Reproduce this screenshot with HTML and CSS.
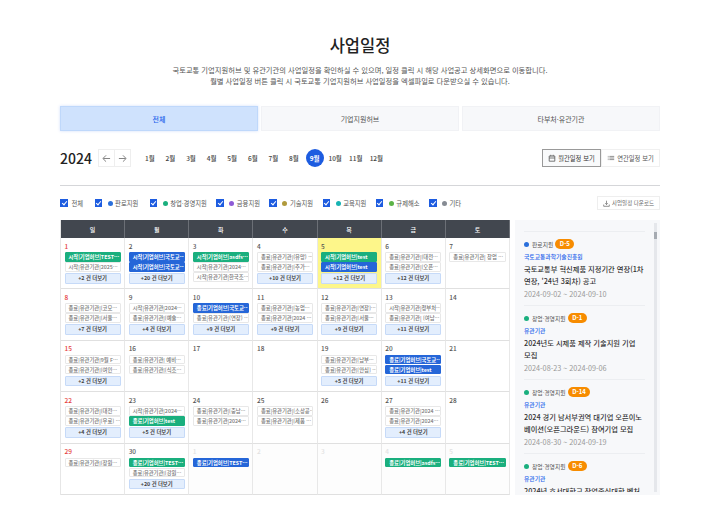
FILE: index.html
```html
<!DOCTYPE html>
<html lang="ko">
<head>
<meta charset="utf-8">
<title>사업일정</title>
<link rel="stylesheet" href="styles.css">
</head>
<body>
<main class="page">
  <h1 class="title">사업일정</h1>
  <p class="lead">국토교통 기업지원허브 및 유관기관의 사업일정을 확인하실 수 있으며, 일정 클릭 시 해당 사업공고 상세화면으로 이동합니다.<br>월별 사업일정 버튼 클릭 시 국토교통 기업지원허브 사업일정을 엑셀파일로 다운받으실 수 있습니다.</p>

  <nav class="tabs">
    <a class="tab active">전체</a>
    <a class="tab">기업지원허브</a>
    <a class="tab">타부처·유관기관</a>
  </nav>

  <section class="toolbar">
    <strong class="year">2024</strong>
    <div class="arrows">
      <button class="arrow"><svg width="9" height="9" viewBox="0 0 10 10"><path d="M9 5H1.500M4.500 1.500 1 5l3.500 3.500" fill="none" stroke="#777" stroke-width="1"/></svg></button>
      <button class="arrow"><svg width="9" height="9" viewBox="0 0 10 10"><path d="M1 5h7.500M5.500 1.500 9 5 5.500 8.500" fill="none" stroke="#777" stroke-width="1"/></svg></button>
    </div>
    <ul class="months">
      <li>1월</li><li>2월</li><li>3월</li><li>4월</li><li>5월</li><li>6월</li><li>7월</li><li>8월</li><li class="current">9월</li><li>10월</li><li>11월</li><li>12월</li>
    </ul>
    <div class="views">
      <button class="view on"><svg width="8" height="8" viewBox="0 0 10 10"><path d="M1.500 2.500h7v6.500h-7zM1.500 5h7M3.500 1v2M6.500 1v2" fill="none" stroke="#555" stroke-width="1"/></svg>월간일정 보기</button>
      <button class="view"><svg width="8" height="8" viewBox="0 0 10 10"><path d="M1 3h1M3 3h6M1 5h1M3 5h6M1 7h1M3 7h6" fill="none" stroke="#777" stroke-width="1"/></svg>연간일정 보기</button>
    </div>
  </section>

  <section class="filters">
    <label class="filter wide"><i class="check"></i>전체</label>
    <label class="filter wide"><i class="check"></i><b class="dot c-blue"></b>판로지원</label>
    <label class="filter"><i class="check"></i><b class="dot c-green"></b>창업·경영지원</label>
    <label class="filter"><i class="check"></i><b class="dot c-purple"></b>금융지원</label>
    <label class="filter"><i class="check"></i><b class="dot c-olive"></b>기술지원</label>
    <label class="filter"><i class="check"></i><b class="dot c-teal"></b>교육지원</label>
    <label class="filter"><i class="check"></i><b class="dot c-lime"></b>규제해소</label>
    <label class="filter"><i class="check"></i><b class="dot c-gray"></b>기타</label>
    <button class="download"><svg width="7" height="7" viewBox="0 0 10 10"><path d="M5 1v5.500M3 4.500 5 6.500l2-2M1 6.500V9h8V6.500" fill="none" stroke="#666" stroke-width="1"/></svg>사업일정 다운로드</button>
  </section>

  <section class="schedule">
    <div class="calendar">
      <div class="dow">일</div><div class="dow">월</div><div class="dow">화</div><div class="dow">수</div><div class="dow">목</div><div class="dow">금</div><div class="dow">토</div>

      <div class="cell"><span class="date sun">1</span><a class="ev green">시작|기업허브|TEST···</a><a class="ev">시작|유관기관|2025···</a><a class="more">+2 건 더보기</a></div>
      <div class="cell"><span class="date">2</span><a class="ev blue">시작|기업허브|국토교···</a><a class="ev blue">시작|기업허브|국토교···</a><a class="more">+20 건 더보기</a></div>
      <div class="cell"><span class="date">3</span><a class="ev green">시작|기업허브|asdfs···</a><a class="ev">시작|유관기관|2024···</a><a class="ev">시작|유관기관|한국조···</a></div>
      <div class="cell"><span class="date">4</span><a class="ev">종료|유관기관|(유망) ···</a><a class="ev">종료|유관기관|[추가···</a><a class="more">+10 건 더보기</a></div>
      <div class="cell today"><span class="date">5</span><a class="ev green">시작|기업허브|test</a><a class="ev blue">시작|기업허브|test</a><a class="more">+12 건 더보기</a></div>
      <div class="cell"><span class="date">6</span><a class="ev">종료|유관기관|[대전···</a><a class="ev">종료|유관기관|[오픈···</a><a class="more">+12 건 더보기</a></div>
      <div class="cell"><span class="date">7</span><a class="ev">종료|유관기관| 창업 ···</a></div>

      <div class="cell"><span class="date sun">8</span><a class="ev">종료|유관기관|[코모···</a><a class="ev">종료|유관기관|[서울···</a><a class="more">+7 건 더보기</a></div>
      <div class="cell"><span class="date">9</span><a class="ev">시작|유관기관|2024···</a><a class="ev">종료|유관기관|[예술···</a><a class="more">+4 건 더보기</a></div>
      <div class="cell"><span class="date">10</span><a class="ev blue">종료|기업허브|국토교···</a><a class="ev">종료|유관기관|(연장) ···</a><a class="more">+9 건 더보기</a></div>
      <div class="cell"><span class="date">11</span><a class="ev">종료|유관기관|[농업···</a><a class="ev">종료|유관기관|2024 ···</a><a class="more">+9 건 더보기</a></div>
      <div class="cell"><span class="date">12</span><a class="ev">종료|유관기관|[연장]···</a><a class="ev">종료|유관기관|[서울···</a><a class="more">+9 건 더보기</a></div>
      <div class="cell"><span class="date">13</span><a class="ev">시작|유관기관|청부처···</a><a class="ev">종료|유관기관| [여남···</a><a class="more">+11 건 더보기</a></div>
      <div class="cell"><span class="date">14</span></div>

      <div class="cell"><span class="date sun">15</span><a class="ev">종료|유관기관|9월 F···</a><a class="ev">종료|유관기관|[여인···</a><a class="more">+2 건 더보기</a></div>
      <div class="cell"><span class="date">16</span><a class="ev">종료|유관기관| 예비···</a><a class="ev">종료|유관기관|[식조···</a></div>
      <div class="cell"><span class="date">17</span></div>
      <div class="cell"><span class="date">18</span></div>
      <div class="cell"><span class="date">19</span><a class="ev">종료|유관기관|[남부···</a><a class="ev">종료|유관기관|[안심] ···</a><a class="more">+5 건 더보기</a></div>
      <div class="cell"><span class="date">20</span><a class="ev blue">종료|기업허브|국토교···</a><a class="ev blue">종료|기업허브|test</a><a class="more">+11 건 더보기</a></div>
      <div class="cell"><span class="date">21</span></div>

      <div class="cell"><span class="date sun">22</span><a class="ev">종료|유관기관|[대전···</a><a class="ev">종료|유관기관|[우료] ···</a><a class="more">+4 건 더보기</a></div>
      <div class="cell"><span class="date">23</span><a class="ev">시작|유관기관|2024···</a><a class="ev green">종료|기업허브|test</a><a class="more">+5 건 더보기</a></div>
      <div class="cell"><span class="date">24</span><a class="ev">종료|유관기관|[충남···</a><a class="ev">종료|유관기관|2024···</a></div>
      <div class="cell"><span class="date">25</span><a class="ev">종료|유관기관|[소상공···</a><a class="ev">종료|유관기관|[제품 ···</a></div>
      <div class="cell"><span class="date">26</span></div>
      <div class="cell"><span class="date">27</span><a class="ev">종료|유관기관|2024 ···</a><a class="ev">종료|유관기관|2024···</a><a class="more">+4 건 더보기</a></div>
      <div class="cell"><span class="date">28</span></div>

      <div class="cell"><span class="date sun">29</span><a class="ev">종료|유관기관|[장원···</a></div>
      <div class="cell"><span class="date">30</span><a class="ev green">종료|기업허브|TEST···</a><a class="ev">종료|유관기관|[강원···</a><a class="more">+20 건 더보기</a></div>
      <div class="cell other"><span class="date">1</span><a class="ev blue">종료|기업허브|TEST···</a></div>
      <div class="cell other"><span class="date">2</span></div>
      <div class="cell other"><span class="date">3</span></div>
      <div class="cell other"><span class="date">4</span><a class="ev green">종료|기업허브|asdfs···</a></div>
      <div class="cell other"><span class="date">5</span><a class="ev green">종료|기업허브|TEST···</a></div>
    </div>

    <aside class="side">
      <div class="side-list">
        <article class="item">
          <div class="item-top"><b class="dot c-blue"></b><span class="cat">판로지원</span><em class="dday">D-5</em></div>
          <div class="org">국토교통과학기술진흥원</div>
          <div class="item-title">국토교통부 혁신제품 지정기간 연장(1차 연장, '24년 3회차) 공고</div>
          <div class="period">2024-09-02 ~ 2024-09-10</div>
        </article>
        <article class="item">
          <div class="item-top"><b class="dot c-green"></b><span class="cat">창업·경영지원</span><em class="dday">D-1</em></div>
          <div class="org">유관기관</div>
          <div class="item-title">2024년도 시제품 제작 기술지원 기업 <span class="keep">모집</span></div>
          <div class="period">2024-08-23 ~ 2024-09-06</div>
        </article>
        <article class="item">
          <div class="item-top"><b class="dot c-green"></b><span class="cat">창업·경영지원</span><em class="dday">D-14</em></div>
          <div class="org">유관기관</div>
          <div class="item-title">2024 경기 남서부권역 대기업 오픈이노베이션(오픈그라운드) 참여기업 모집</div>
          <div class="period">2024-08-30 ~ 2024-09-19</div>
        </article>
        <article class="item">
          <div class="item-top"><b class="dot c-green"></b><span class="cat">창업·경영지원</span><em class="dday">D-6</em></div>
          <div class="org">유관기관</div>
          <div class="item-title">2024년 호서대학교 창업중심대학 벤처</div>
        </article>
      </div>
      <div class="scrollbar"><span class="thumb"></span></div>
    </aside>
  </section>
</main>
</body>
</html>
```

FILE: styles.css
```css
* { box-sizing: border-box; margin: 0; padding: 0; }
html, body { background: #fff; }
body {
  font-family: "Noto Sans CJK KR", "Noto Sans", sans-serif;
  color: #333;
  overflow: hidden;
}
a { display: block; }
ul { list-style: none; }
button { font-family: inherit; background: #fff; cursor: pointer; }
em { font-style: normal; }

.page { width: 600px; margin: 0 auto; padding-top: 34px; }

.title { font-size: 16.500px; line-height: 22px; font-weight: 500; color: #222; text-align: center; }
.lead { margin-top: 9px; font-size: 7.300px; line-height: 11px; color: #555; text-align: center; }

.tabs { display: grid; grid-template-columns: repeat(3, 1fr); gap: 3px; margin-top: 19px; height: 25px; }
.tab { display: flex; align-items: center; justify-content: center; font-size: 7px; color: #555; background: #f7f8fa; border: 1px solid #f1f2f5; }
.tab.active { background: #cfe2fd; border-color: #bfd8fb; color: #2563eb; font-weight: 500; box-shadow: 0 0 3px rgba(37, 99, 235, .2); }

.toolbar { display: flex; align-items: center; margin-top: 18px; height: 18px; }
.year { font-size: 14px; font-weight: 500; color: #222; width: 38px; }
.arrows { display: flex; }
.arrow { width: 17px; height: 18px; border: 1px solid #eee; display: flex; align-items: center; justify-content: center; }
.arrow + .arrow { margin-left: -1px; }
.months { display: flex; margin-left: 8.500px; }
.months li { width: 20.600px; height: 18px; display: flex; align-items: center; justify-content: center; font-size: 6.500px; font-weight: 500; color: #444; }
.months .current { width: 18px; margin: 0 1.300px; border-radius: 50%; background: #1d5ce0; color: #fff; font-weight: 700; }
.views { display: flex; margin-left: auto; }
.view { width: 59px; height: 18px; display: flex; align-items: center; justify-content: center; gap: 2px; font-size: 6.300px; color: #555; border: 1px solid #f0f0f0; }
.view.on { border: 1px solid #999; background: #f9fafb; color: #333; }

.filters { display: flex; align-items: center; margin-top: 18px; padding-top: 10px; border-top: 1px solid #d5d6d9; height: 25px; }
.filter { display: flex; align-items: center; font-size: 6.300px; color: #555; margin-right: 9.500px; white-space: nowrap; }
.filter.wide { margin-right: 11.500px; }
.check { position: relative; width: 7.500px; height: 7.500px; background: #1d5ce0; margin-right: 4px; flex: none; }
.check::after { content: ""; position: absolute; left: 2.500px; top: 1px; width: 2px; height: 4px; border: solid #fff; border-width: 0 1px 1px 0; transform: rotate(40deg); }
.dot { display: block; width: 5px; height: 5px; border-radius: 50%; margin: 0 2.500px 0 1.500px; flex: none; }
.c-blue { background: #2a6fdb; }
.c-green { background: #1aaf7e; }
.c-purple { background: #8e5bd6; }
.c-olive { background: #b09a3c; }
.c-teal { background: #17b3b3; }
.c-lime { background: #5cb346; }
.c-gray { background: #868b93; }
.download { margin-left: auto; width: 63px; height: 14px; display: flex; align-items: center; justify-content: center; gap: 2px; font-size: 5.500px; color: #666; border: 1px solid #eee; }

.schedule { display: flex; gap: 5px; margin-top: 10px; height: 275px; }
.calendar { width: 450px; flex: none; display: grid; grid-template-columns: repeat(7, 1fr); grid-template-rows: 18px repeat(5, 1fr); border-left: 1px solid #e6e6e6; }
.dow { display: flex; align-items: center; justify-content: center; background: #42474f; color: #fff; font-size: 6px; font-weight: 500; border-right: 1px solid #6b6f76; }
.cell { min-width: 0; padding: 2.500px 3.500px 0; border-right: 1px solid #e8e8e8; border-bottom: 1px solid #e0e0e0; overflow: hidden; }
.cell.today { background: #fdf68a; }
.cell.other { background: #fdfdfd; }
.date { display: block; height: 11.500px; font-size: 6.500px; line-height: 10px; font-weight: 500; color: #555; }
.sun { color: #e53e3e; }
.other .date { color: #e2e2e2; }
.ev { height: 9.500px; margin-bottom: .500px; padding: 0 3px; font-size: 5.300px; line-height: 8px; white-space: nowrap; overflow: hidden; color: #777; background: #fff; border: 1px solid #e8e8e8; border-radius: 1px; font-weight: 500; }
.ev.green { background: #1aaf7e; border-color: #1aaf7e; color: #fff; font-weight: 700; }
.ev.blue { background: #2566d8; border-color: #2566d8; color: #fff; font-weight: 700; }
.more { height: 10.500px; margin-top: 1.500px; font-size: 5.300px; line-height: 9px; font-weight: 700; color: #444; text-align: center; background: #e3eefd; border: 1px solid #c6daf8; border-radius: 1px; }

.side { position: relative; flex: 1; background: #f7f8fa; padding: 11px 15px 3px 9px; }
.side-list { height: 261px; overflow: hidden; }
.item { height: 74px; padding-top: 7px; border-top: 1px solid #eceef1; }
.item-top { display: flex; align-items: center; height: 10px; }
.item-top .dot { margin: 0 3px 0 0; }
.cat { font-size: 5.800px; color: #555; }
.dday { margin-left: 2px; padding: 0 4.500px; height: 10px; line-height: 10px; border-radius: 5px; background: #f78c00; color: #fff; font-size: 6px; font-weight: 700; }
.org { margin-top: 3px; font-size: 5.800px; line-height: 9px; color: #2563eb; font-weight: 500; }
.item-title { margin-top: 2px; font-size: 7.250px; line-height: 12px; font-weight: 500; color: #333; word-break: break-all; }
.keep { display: inline-block; }
.period { margin-top: 2px; font-size: 7.250px; line-height: 11px; color: #999; }
.scrollbar { position: absolute; right: 3px; top: 3px; bottom: 3px; width: 3.500px; background: #e5e7eb; }
.thumb { display: block; margin-top: 9px; height: 7px; background: #a6abb2; }
```
